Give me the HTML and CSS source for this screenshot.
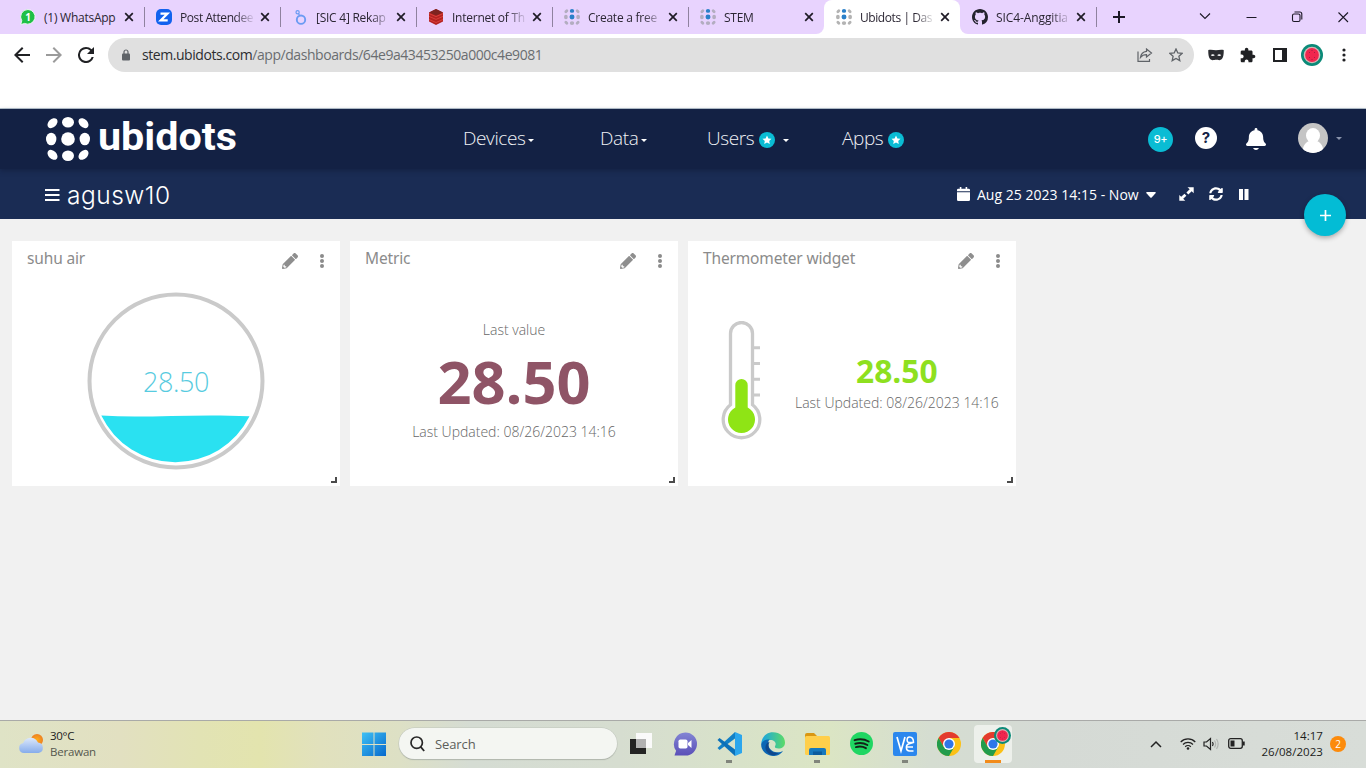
FILE: index.html
```html
<!DOCTYPE html>
<html lang="en">
<head>
<meta charset="utf-8">
<title>Ubidots | Dashboards</title>
<link rel="stylesheet" href="styles.css">
</head>
<body>
<svg class="defs" width="0" height="0">
  <defs>
    <symbol id="x" viewBox="0 0 10 10"><path d="M1.2 1.2l7.6 7.6M8.8 1.2L1.2 8.8" stroke="#1f1b26" stroke-width="1.7" fill="none"/></symbol>
    <symbol id="dots" viewBox="0 0 44 44">
      <g><circle cx="22" cy="22" r="6.8"/><ellipse cx="22" cy="5.3" rx="6" ry="5.2"/></g>
    </symbol>
    <symbol id="dots-outer" viewBox="0 0 44 44">
      <ellipse cx="22" cy="38.7" rx="6" ry="5.2"/><ellipse cx="5.2" cy="22" rx="5.2" ry="6.3"/><ellipse cx="38.8" cy="22" rx="5.2" ry="6.3"/>
      <ellipse cx="6.5" cy="6.2" rx="4" ry="5.8" transform="rotate(45 6.5 6.2)"/><ellipse cx="37.5" cy="6.2" rx="4" ry="5.8" transform="rotate(-45 37.5 6.2)"/>
      <ellipse cx="6.5" cy="37.8" rx="4" ry="5.8" transform="rotate(-45 6.5 37.8)"/><ellipse cx="37.5" cy="37.8" rx="4" ry="5.8" transform="rotate(45 37.5 37.8)"/>
    </symbol>
    <symbol id="pencil" viewBox="0 0 512 512"><path d="M497.9 142.1l-46.1 46.1c-4.7 4.7-12.3 4.7-17 0l-111-111c-4.7-4.7-4.7-12.3 0-17l46.1-46.1c18.7-18.7 49.1-18.7 67.9 0l60.1 60.1c18.8 18.7 18.8 49.1 0 67.9zM284.2 99.8L21.6 362.4.4 483.9c-2.9 16.4 11.4 30.6 27.8 27.8l121.5-21.3 262.6-262.6c4.7-4.7 4.7-12.3 0-17l-111-111c-4.8-4.7-12.4-4.7-17.1 0zM88 424h48v36.3l-64.5 11.3-31.1-31.1L51.7 376H88v48z" fill="#8e8e8e"/></symbol>
    <symbol id="more" viewBox="0 0 6 14"><g fill="#8b8b8b"><circle cx="3" cy="2" r="2"/><circle cx="3" cy="7" r="2"/><circle cx="3" cy="12" r="2"/></g></symbol>
    <symbol id="badge" viewBox="0 0 16 16"><circle cx="8" cy="8" r="8" fill="#0abcd4"/><path d="M8 3.600l1.400 2.800 3.100.4-2.300 2.200.6 3.100L8 10.600l-2.800 1.500.6-3.100-2.300-2.200 3.100-.4z" fill="#fff"/></symbol>
    <symbol id="chrome" viewBox="0 0 24 24">
      <circle cx="12" cy="12" r="12" fill="#fbc116"/>
      <path d="M12 6h10.4A12 12 0 0 0 1.6 6l5.2 9z" fill="#e33b2e"/>
      <path d="M1.6 6A12 12 0 0 0 12 24l5.2-9L12 12l-5.2 3z" fill="#229c4c"/>
      <circle cx="12" cy="12" r="6" fill="#fff"/><circle cx="12" cy="12" r="4.6" fill="#2f76e8"/>
    </symbol>
    <symbol id="melon" viewBox="0 0 22 22"><circle cx="11" cy="11" r="11" fill="#0b8a78"/><circle cx="11" cy="11" r="8.300" fill="#d5b5b4"/><circle cx="11" cy="11" r="6.900" fill="#f1264e"/><g fill="#8e1e42"><circle cx="8.500" cy="8.500" r=".5"/><circle cx="13.500" cy="8.500" r=".5"/><circle cx="8.500" cy="13.500" r=".5"/><circle cx="13.500" cy="13.500" r=".5"/><circle cx="11" cy="6.500" r=".5"/><circle cx="11" cy="15.500" r=".5"/></g></symbol>
  </defs>
</svg>

<header class="tabstrip">
  <div class="tab">
    <svg class="fav" viewBox="0 0 16 16"><path d="M8 .5a7.3 7.3 0 1 1-3.4 13.9L.8 15.5l1-3.8A7.3 7.3 0 0 1 8 .5z" fill="#1fbf46" stroke="#fff" stroke-width=".8"/><text x="8" y="11.6" class="wa">1</text></svg>
    <span class="tab-t">(1) WhatsApp</span><svg class="close"><use href="#x"/></svg>
  </div>
  <div class="tab sep">
    <svg class="fav" viewBox="0 0 16 16"><rect width="16" height="16" rx="5" fill="#1262ee"/><path d="M4.5 4.6h7L4.7 11.4h7" fill="none" stroke="#fff" stroke-width="2.2"/></svg>
    <span class="tab-t tight">Post Attendee</span><svg class="close"><use href="#x"/></svg>
  </div>
  <div class="tab sep">
    <svg class="fav" viewBox="0 0 16 16"><g fill="none" stroke="#6b9bf3"><circle cx="9" cy="10.7" r="4.2" stroke-width="1.9"/><circle cx="5.6" cy="3.3" r="1.6" stroke-width="1.2"/><path d="M6.5 4.6l1.2 2" stroke-width="1.1"/></g></svg>
    <span class="tab-t">[SIC 4] Rekap</span><svg class="close"><use href="#x"/></svg>
  </div>
  <div class="tab sep">
    <svg class="fav" viewBox="0 0 16 16"><path d="M8 0l7 3.4v9L8 16l-7-3.6v-9z" fill="#b52321"/><path d="M1 3.4L8 0l7 3.4-7 3z" fill="#7e2420"/><path d="M1 7.4l7 3 7-3M1 10.5l7 3 7-3M1 4.6l7 3 7-3" stroke="#d9403a" fill="none" stroke-width="1"/></svg>
    <span class="tab-t">Internet of Th</span><svg class="close"><use href="#x"/></svg>
  </div>
  <div class="tab sep">
    <svg class="fav" viewBox="0 0 44 44"><use href="#dots-outer" fill="#b3adc0"/><use href="#dots" fill="#2a80c9"/></svg>
    <span class="tab-t">Create a free</span><svg class="close"><use href="#x"/></svg>
  </div>
  <div class="tab sep">
    <svg class="fav" viewBox="0 0 44 44"><use href="#dots-outer" fill="#b3adc0"/><use href="#dots" fill="#2a80c9"/></svg>
    <span class="tab-t">STEM</span><svg class="close"><use href="#x"/></svg>
  </div>
  <div class="tab active">
    <svg class="fav" viewBox="0 0 44 44"><use href="#dots-outer" fill="#b3b3b3"/><use href="#dots" fill="#2a80c9"/></svg>
    <span class="tab-t tight">Ubidots | Das</span><svg class="close"><use href="#x"/></svg>
  </div>
  <div class="tab">
    <svg class="fav" viewBox="0 0 16 16"><path fill="#24222e" d="M8 0C3.58 0 0 3.58 0 8c0 3.54 2.29 6.53 5.47 7.59.4.07.55-.17.55-.38 0-.19-.01-.82-.01-1.49-2.01.37-2.53-.49-2.69-.94-.09-.23-.48-.94-.82-1.13-.28-.15-.68-.52-.01-.53.63-.01 1.08.58 1.23.82.72 1.21 1.87.87 2.33.66.07-.52.28-.87.51-1.07-1.78-.2-3.64-.89-3.64-3.95 0-.87.31-1.59.82-2.15-.08-.2-.36-1.02.08-2.12 0 0 .67-.21 2.2.82.64-.18 1.32-.27 2-.27s1.36.09 2 .27c1.53-1.04 2.2-.82 2.2-.82.44 1.1.16 1.92.08 2.12.51.56.82 1.27.82 2.15 0 3.07-1.87 3.75-3.65 3.95.29.25.54.73.54 1.48 0 1.07-.01 1.93-.01 2.2 0 .21.15.46.55.38A8.01 8.01 0 0 0 16 8c0-4.42-3.58-8-8-8z"/></svg>
    <span class="tab-t wide">SIC4-Anggitia</span><svg class="close"><use href="#x"/></svg>
  </div>
  <div class="tail sep"><svg class="newtab" width="14" height="14" viewBox="0 0 14 14"><path d="M7 1v12M1 7h12" stroke="#1c1826" stroke-width="2"/></svg></div>
  <svg class="winctl" width="166" height="28" viewBox="0 0 166 28" fill="none" stroke="#1c1826" stroke-width="1.100">
    <path d="M5 10.500l5 5 5-5M51.500 14.500h10"/>
    <rect x="97.500" y="11" width="7.500" height="7.500" rx="1.500"/><path d="M99.500 9h5.300a2 2 0 0 1 2 2v5.500"/>
    <path d="M143.500 9.500l9.500 9.500M153 9.500L143.500 19"/>
  </svg>
</header>

<div class="toolbar">
  <svg class="nav-i" width="16" height="16" viewBox="4 4 16 16"><path d="M20 11H7.830l5.590-5.590L12 4l-8 8 8 8 1.410-1.410L7.830 13H20z" fill="#202124"/></svg>
  <svg class="nav-i" width="16" height="16" viewBox="4 4 16 16"><path d="M12 4l-1.410 1.410L16.170 11H4v2h12.170l-5.580 5.590L12 20l8-8z" fill="#9b9b9b"/></svg>
  <svg class="nav-i" width="16" height="16" viewBox="4 4 16 16"><path d="M17.650 6.350A7.960 7.960 0 0 0 12 4a8 8 0 1 0 7.730 10h-2.080A6 6 0 1 1 12 6c1.660 0 3.140.690 4.220 1.780L13 11h7V4z" fill="#202124"/></svg>
  <div class="omni">
    <svg width="8" height="12" viewBox="0 0 8 12"><path d="M2 5V3a2 2 0 0 1 4 0v2" fill="none" stroke="#5f6368" stroke-width="1.200"/><rect y="4.500" width="8" height="7" rx="1" fill="#5f6368"/></svg>
    <span class="url"><b>stem.ubidots.com</b>/app/dashboards/64e9a43453250a000c4e9081</span>
    <svg width="16" height="14" viewBox="0 0 16 14" fill="none" stroke="#5f6368" stroke-width="1.200"><path d="M1 3.500v9.900h11.500v-2.400"/><path d="M9.500 1l5 4-5 4V6.700c-2.700 0-4.500.8-6 2.700.4-3.200 2.500-5.600 6-6z"/></svg>
    <svg width="14" height="14" viewBox="0 0 14 14"><path d="M7 1l1.800 4 4.300.4-3.200 2.900.9 4.300L7 10.400l-3.800 2.200.9-4.300L.9 5.400 5.200 5z" fill="none" stroke="#5f6368" stroke-width="1.300"/></svg>
  </div>
  <div class="exts">
    <svg width="16" height="12" viewBox="0 0 16 12"><path d="M.3 1C3 .3 5.500 1 8 1.300c2.500-.3 5-1 7.700-.3.200 5.500-.7 9.800-4.200 10.200-1.500 0-2.500-.4-3.500-.4s-2 .4-3.500.4C1 10.800.1 6.500.3 1z" fill="#2b2c30"/><path d="M2.800 6.300c1-1.500 3.200-1.200 4 0-1.200.8-2.900.8-4 0zM13.200 6.300c-1-1.500-3.200-1.200-4 0 1.200.8 2.900.8 4 0z" fill="#fff"/></svg>
    <svg width="16" height="16" viewBox="1 0 23 23"><path d="M20.500 11H19V7c0-1.100-.9-2-2-2h-4V3.500C13 2.120 11.880 1 10.500 1S8 2.120 8 3.500V5H4c-1.100 0-1.990.9-1.990 2v3.800H3.500c1.490 0 2.700 1.210 2.700 2.700s-1.210 2.700-2.700 2.700H2V20c0 1.100.9 2 2 2h3.800v-1.500c0-1.490 1.210-2.700 2.700-2.700 1.490 0 2.700 1.210 2.700 2.700V22H17c1.100 0 2-.9 2-2v-4h1.500c1.380 0 2.500-1.120 2.500-2.500S21.880 11 20.500 11z" fill="#202124"/></svg>
    <svg width="14" height="14" viewBox="0 0 14 14"><rect x="1" y="1" width="12" height="12" fill="#fff" stroke="#202124" stroke-width="2"/><path d="M9 0h5v14H9z" fill="#202124"/></svg>
    <svg width="22" height="22"><use href="#melon"/></svg>
    <svg width="4" height="14" viewBox="0 0 4 14"><g fill="#202124"><circle cx="2" cy="2" r="1.600"/><circle cx="2" cy="7" r="1.600"/><circle cx="2" cy="12" r="1.600"/></g></svg>
  </div>
</div>

<nav class="topnav">
  <svg class="logo" width="192" height="46" viewBox="0 0 192 46">
    <g fill="#fff"><use href="#dots" width="44" height="44" y="1"/><use href="#dots-outer" width="44" height="44" y="1"/></g>
    <text x="52" y="33.500" textLength="139" lengthAdjust="spacingAndGlyphs" class="logo-t">ubidots</text>
  </svg>
  <span class="menu m1">Devices<i class="caret"></i></span>
  <span class="menu m2">Data<i class="caret"></i></span>
  <span class="menu m3">Users<svg class="bdg"><use href="#badge"/></svg><i class="caret"></i></span>
  <span class="menu m4">Apps<svg class="bdg"><use href="#badge"/></svg></span>
  <span class="count">9+</span>
  <span class="help">?</span>
  <svg class="bell" width="20" height="22" viewBox="0 0 448 512" preserveAspectRatio="none"><path fill="#fff" d="M224 512c35.320 0 63.970-28.650 63.970-46H160.030c0 17.350 28.650 46 63.970 46zm215.390-149.710c-19.320-20.760-55.470-51.990-55.470-154.290 0-77.700-54.480-139.900-127.940-155.160V32c0-17.670-14.320-32-31.980-32s-31.980 14.330-31.980 32v20.840C118.560 68.100 64.080 130.300 64.080 208c0 102.300-36.150 133.530-55.470 154.290-6 6.450-8.660 14.160-8.610 21.710.11 16.400 12.980 32 32.100 32h383.800c19.120 0 32-15.600 32.100-32 .05-7.550-2.610-15.270-8.610-21.710z"/></svg>
  <svg class="avatar" width="30" height="30" viewBox="0 0 30 30"><clipPath id="av"><circle cx="15" cy="15" r="15"/></clipPath><g clip-path="url(#av)"><rect width="30" height="30" fill="#c5c5c5"/><ellipse cx="15" cy="12.500" rx="7" ry="7.500" fill="#fff"/><path d="M4.500 30c0-8 4-11.500 7-12h7c3 .5 7 4 7 12z" fill="#fff"/></g></svg>
  <i class="caret dim"></i>
</nav>

<div class="subnav">
  <svg width="15" height="14" viewBox="0 0 15 14"><path d="M0 2h14.500M0 7h14.500M0 12h14.500" stroke="#fff" stroke-width="2"/></svg>
  <h1>agusw10</h1>
  <svg class="cal" width="13" height="14" viewBox="0 0 13 14"><path d="M0 4.300V3a1.300 1.300 0 0 1 1.300-1.300h1.500V0h1.600v1.700h4.200V0h1.600v1.700h1.500A1.300 1.300 0 0 1 13 3v1.300zM0 5.300h13v7.400a1.300 1.300 0 0 1-1.300 1.300H1.300A1.300 1.300 0 0 1 0 12.700z" fill="#fff"/></svg>
  <span class="range">Aug 25 2023 14:15 - Now</span>
  <svg class="down" width="10" height="6" viewBox="0 0 10 6"><path d="M1 0h8q1.300.3.500 1.300L5.700 5.500q-.7.600-1.400 0L.5 1.300Q-.3.300 1 0z" fill="#fff"/></svg>
  <svg class="expand" width="15" height="14" viewBox="0 0 15 14"><path d="M8.500.3H14.700V6.200L12.700 4.300 9.300 7.400 7.400 5.500l3.300-3.200zM6.300 13.700H.3V7.900l1.900 1.900 3.300-3 1.900 1.900-3.200 3.100z" fill="#fff"/></svg>
  <svg class="sync" width="14" height="14" viewBox="0 0 512 512"><path fill="#fff" d="M370.720 133.280C339.458 104.008 298.888 87.962 255.848 88c-77.458.068-144.328 53.178-162.791 126.850-1.344 5.363-6.122 9.150-11.651 9.150H24.103c-7.498 0-13.194-6.807-11.807-14.176C33.933 94.924 134.813 8 256 8c66.448 0 126.791 26.136 171.315 68.685L463.030 40.970C478.149 25.851 504 36.559 504 57.941V192c0 13.255-10.745 24-24 24H345.941c-21.382 0-32.090-25.851-16.971-40.971l41.750-41.749zM32 296h134.059c21.382 0 32.090 25.851 16.971 40.971l-41.750 41.750c31.262 29.273 71.835 45.319 114.876 45.280 77.418-.07 144.315-53.144 162.787-126.849 1.344-5.363 6.122-9.150 11.651-9.150h57.304c7.498 0 13.194 6.807 11.807 14.176C478.067 417.076 377.187 504 256 504c-66.448 0-126.791-26.136-171.315-68.685L48.970 471.030C33.851 486.149 8 475.441 8 454.059V320c0-13.255 10.745-24 24-24z"/></svg>
  <svg class="pause" width="10" height="11" viewBox="0 0 10 11"><path d="M0 0h4v11H0zM5.500 0h4v11h-4z" fill="#fff"/></svg>
  <button class="add"><svg width="11" height="11" viewBox="0 0 11 11"><path d="M5.500 0v11M0 5.500h11" stroke="#fff" stroke-width="1.700"/></svg></button>
</div>

<main class="board">
  <section class="card">
    <div class="card-h"><h2>suhu air</h2><svg class="pen" width="16" height="16"><use href="#pencil"/></svg><svg width="6" height="14"><use href="#more"/></svg></div>
    <div class="card-b">
      <svg class="tank" width="178" height="178" viewBox="0 0 178 178">
        <circle cx="89" cy="89" r="86.500" fill="none" stroke="#cacaca" stroke-width="4"/>
        <path d="M14.300 123.600C60 126.500 105 121.500 162.500 124.300A82.500 82.500 0 0 1 14.300 123.600z" fill="#2ae1f1"/>
        <text x="89" y="99.500" text-anchor="middle" class="tank-t">28.50</text>
      </svg>
    </div>
    <svg class="grip" width="6" height="6" viewBox="0 0 6 6"><path d="M5 0v5H0" fill="none" stroke="#4b4b4b" stroke-width="2"/></svg>
  </section>
  <section class="card">
    <div class="card-h"><h2>Metric</h2><svg class="pen" width="16" height="16"><use href="#pencil"/></svg><svg width="6" height="14"><use href="#more"/></svg></div>
    <div class="card-b metric">
      <span class="lbl">Last value</span>
      <strong class="big">28.50</strong>
      <span class="lbl">Last Updated: 08/26/2023 14:16</span>
    </div>
    <svg class="grip" width="6" height="6" viewBox="0 0 6 6"><path d="M5 0v5H0" fill="none" stroke="#4b4b4b" stroke-width="2"/></svg>
  </section>
  <section class="card">
    <div class="card-h"><h2>Thermometer widget</h2><svg class="pen" width="16" height="16"><use href="#pencil"/></svg><svg width="6" height="14"><use href="#more"/></svg></div>
    <div class="card-b thermo">
      <svg width="42" height="120" viewBox="0 0 42 120">
        <path d="M32 26.700h7M32 42.500h7M32 58.200h7M32 74h7" stroke="#cacaca" stroke-width="3"/>
        <path d="M9.500 12.500a11 11 0 0 1 22 0v71.300a18.300 18.300 0 1 1-22 0z" fill="#fff" stroke="#cacaca" stroke-width="3.300"/>
        <path d="M14.300 64.200a6.200 6.200 0 0 1 12.400 0v22.300a13.500 13.500 0 1 1-12.400 0z" fill="#8fe415"/>
      </svg>
      <div class="reading"><strong class="green">28.50</strong><span class="lbl">Last Updated: 08/26/2023 14:16</span></div>
    </div>
    <svg class="grip" width="6" height="6" viewBox="0 0 6 6"><path d="M5 0v5H0" fill="none" stroke="#4b4b4b" stroke-width="2"/></svg>
  </section>
</main>

<footer class="taskbar">
  <svg class="weather" width="26" height="22" viewBox="0 0 26 22"><defs><linearGradient id="cl" x2="0" y2="1"><stop stop-color="#dce8fb"/><stop offset="1" stop-color="#86aceb"/></linearGradient><radialGradient id="sn"><stop stop-color="#ffad18"/><stop offset="1" stop-color="#ed8122"/></radialGradient></defs><circle cx="19" cy="7" r="6" fill="url(#sn)"/><path d="M6 20a5 5 0 0 1-.8-9.900A8 8 0 0 1 20 9.500a5.300 5.300 0 0 1 .5 10.500z" fill="url(#cl)"/></svg>
  <div class="wtext"><span>30°C</span><span class="sub">Berawan</span></div>
  <svg class="start" width="24" height="24" viewBox="0 0 24 24"><defs><linearGradient id="wn" x2="1" y2="1"><stop stop-color="#3fc1f5"/><stop offset="1" stop-color="#0669cd"/></linearGradient></defs><path d="M0 .5h11.500V12H0zM12.500.500H24V12H12.500zM0 13h11.500v11H0zM12.500 13H24v11H12.500z" fill="url(#wn)"/></svg>
  <div class="search"><svg width="16" height="16" viewBox="0 0 16 16"><circle cx="7.700" cy="6.700" r="5.700" fill="none" stroke="#272727" stroke-width="1.700"/><path d="M11.500 10.700l3.700 4.300" stroke="#272727" stroke-width="1.800"/></svg><span>Search</span></div>
  <div class="apps">
    <div class="app"><svg width="24" height="24" viewBox="0 0 24 24"><path d="M1 7h16v15H1z" fill="#242424"/><path d="M7 1h16v15H7z" fill="#fafafa"/><path d="M7 7h10v9H7z" fill="#b2b2b2"/></svg></div>
    <div class="app"><svg width="24" height="24" viewBox="0 0 24 24"><defs><linearGradient id="ch" x2="0" y2="1"><stop stop-color="#8385d4"/><stop offset="1" stop-color="#5a4fb8"/></linearGradient></defs><path d="M12.500.5a11.500 11.500 0 0 1 0 23H1.500l1.600-4.800A11.500 11.500 0 0 1 12.500.5z" fill="url(#ch)"/><rect x="5.500" y="7.500" width="9" height="9" rx="1.800" fill="#fff"/><path d="M15 11l3.500-3v8l-3.500-3z" fill="#fff"/></svg></div>
    <div class="app dot"><svg width="25" height="24" viewBox="0 0 25 24"><path d="M.5 16L18 0v6.500L2.500 18z" fill="#1380c6"/><path d="M2.500 6L18 17.500V24L.5 8z" fill="#0b70b8"/><path d="M18 0l7 3v18l-7 3z" fill="#2ba6ed"/></svg></div>
    <div class="app"><svg width="24" height="24" viewBox="0 0 24 24"><defs><linearGradient id="ed"><stop stop-color="#1ba3e3"/><stop offset="1" stop-color="#5bdb67"/></linearGradient></defs><path d="M.2 12C1 4 6 .2 12 .2c7 0 12 4.800 12 10.300 0 4-3 6-6.500 6-3 0-4-1.100-3.500-2.200 2-3.300-.5-6.300-4.500-6.300C5 8 1.500 10 .2 12z" fill="url(#ed)"/><path d="M.2 12C1.500 8.500 5 7 8.500 7.500 6 10 6.500 18 14 20c3 .8 6 0 8-1.300C19.500 23 15 24 12 23.900 5 23.600-.3 18 .2 12z" fill="#0c67b5"/><path d="M8.500 10c-3 5 1 11.500 9 11-5 4.500-12 1.500-13-4.500C4 13 6 10.500 8.500 10z" fill="#0f488d"/></svg></div>
    <div class="app dot"><svg width="25" height="24" viewBox="0 0 25 24"><path d="M0 3a2 2 0 0 1 2-2h7l3 3-3 4H0z" fill="#d99713"/><rect y="4" width="25" height="19" rx="1.500" fill="#ffcf4b"/><path d="M4 23v-5a2 2 0 0 1 2-2h13a2 2 0 0 1 2 2v5z" fill="#1779bd"/><path d="M8 19.500h9v3.500H8z" fill="#0c5c9d"/></svg></div>
    <div class="app"><svg width="23" height="23" viewBox="0 0 24 24"><circle cx="12" cy="12" r="12" fill="#1fd662"/><path d="M4.800 8.500c5-1.500 10.500-1 14.700 1.400M5.500 12.300c4.300-1.200 9-.8 12.600 1.300M6.200 15.800c3.600-1 7.400-.6 10.400 1.100" fill="none" stroke="#142318" stroke-width="2" stroke-linecap="round"/></svg></div>
    <div class="app dot"><svg width="24" height="24" viewBox="0 0 24 24"><rect width="24" height="24" rx="2" fill="#2b87ee"/><path d="M4 5l4 14 4-14" fill="none" stroke="#fff" stroke-width="1.700"/><path d="M20.500 10.500h-4.500c-2.600 0-2.600-5.500.5-5.500s4 2.500 4 5.500l-5 1.500c-3 1-3 7 1 7h4M14 15h6" fill="none" stroke="#fff" stroke-width="1.500"/></svg></div>
    <div class="app"><svg width="24" height="24"><use href="#chrome"/></svg></div>
    <div class="app on"><svg width="24" height="24"><use href="#chrome"/></svg><svg class="mini" width="17" height="17"><use href="#melon"/></svg></div>
  </div>
  <svg class="up" width="12" height="8" viewBox="0 0 12 8"><path d="M1 7l5-5 5 5" fill="none" stroke="#222" stroke-width="1.500"/></svg>
  <svg class="wifi" width="16" height="13" viewBox="0 0 16 13"><g fill="none" stroke="#222" stroke-width="1.200"><path d="M.7 5a10.300 10.300 0 0 1 14.600 0M3 7.500a7 7 0 0 1 10 0M5.200 9.800a4 4 0 0 1 5.600 0"/></g><circle cx="8" cy="11.500" r="1.300" fill="#222"/></svg>
  <svg class="snd" width="16" height="14" viewBox="0 0 16 14"><g fill="none" stroke="#222" stroke-width="1.200"><path d="M1 5h2.500L7.500 1.500v11L3.500 9H1z"/><path d="M9.500 5q1.300 2 0 4"/><path d="M11.500 3.500q2.300 3.500 0 7M13.500 2q3.300 5 0 10" stroke="#b1b4b1"/></g></svg>
  <svg class="bat" width="17" height="11" viewBox="0 0 17 11"><rect x=".7" y=".7" width="13.600" height="9.600" rx="2" fill="none" stroke="#222" stroke-width="1.300"/><path d="M2.500 2.500h4v6h-4zM15 3.500h1.700v4H15z" fill="#222"/></svg>
  <div class="clock"><span>14:17</span><span>26/08/2023</span></div>
  <span class="note">2</span>
</footer>
</body>
</html>
```
FILE: styles.css
```css
* { box-sizing: border-box; }
body { margin: 0; width: 1366px; height: 768px; overflow: hidden; display: flex; flex-direction: column; background: #f1f1f1; font-family: "Open Sans", "Noto Sans", sans-serif; }
svg { display: block; flex: none; }
.defs { position: absolute; }

.tabstrip { height: 34px; flex: none; display: flex; align-items: center; background: linear-gradient(#fff, #fff) 816px 26px / 152px 8px no-repeat #e8d3fe; padding-left: 8px; }
.tab { width: 136px; height: 34px; flex: none; display: flex; align-items: center; padding-left: 12px; background-color: #e8d3fe; }
.sep { background-image: linear-gradient(#8f829f, #8f829f); background-position: 0 7px; background-size: 1px 20px; background-repeat: no-repeat; }
.tab.active { background: #fff; border-radius: 8px 8px 0 0; box-shadow: 0 -8px 0 -0.1px #e8d3fe; clip-path: inset(0); }
.tab:nth-child(6) { border-bottom-right-radius: 8px; }
.tab:nth-child(8) { border-bottom-left-radius: 8px; }
.fav { width: 16px; height: 16px; }
.wa { font: 700 10px "Open Sans", sans-serif; fill: #fff; text-anchor: middle; }
.tab-t { width: 74px; margin-left: 8px; font-size: 12px; letter-spacing: -0.25px; color: #2b2633; white-space: nowrap; -webkit-mask-image: linear-gradient(90deg, #000 74%, transparent 102%); mask-image: linear-gradient(90deg, #000 74%, transparent 102%); }
.tab-t.tight { letter-spacing: -0.42px; }
.tab-t.wide { letter-spacing: -0.1px; }
.tab:first-child .tab-t { -webkit-mask-image: none; mask-image: none; }
.close { width: 10px; height: 10px; margin-left: 6px; }
.tail { width: 30px; height: 34px; display: flex; align-items: center; }
.newtab { margin-left: 16px; }
.winctl { margin-left: 69px; }

.toolbar { height: 75px; flex: none; display: flex; align-items: flex-start; background: #fff; border-bottom: 1px solid #b9c5cf; padding: 4px 0 0 14px; }
.nav-i { margin: 9px 16px 0 0; }
.omni { width: 1086px; height: 34px; margin-left: -2px; border-radius: 17px; background: #e0e0e0; display: flex; align-items: center; padding: 0 10px 2px 14px; }
.url { margin-left: 12px; width: 995px; flex: none; font-size: 14px; letter-spacing: -0.44px; color: #6a6d70; white-space: nowrap; }
.url b { font-weight: 400; color: #2c2d30; }
.omni svg { margin-top: 1px; }
.omni svg:last-child { margin-left: 16px; }
.exts { height: 34px; display: flex; align-items: center; margin-left: 14px; }
.exts svg:nth-child(2) { margin-left: 16px; }
.exts svg:nth-child(3) { margin-left: 17px; }
.exts svg:nth-child(4) { margin-left: 14px; }
.exts svg:nth-child(5) { margin-left: 19px; }

.topnav { height: 60px; flex: none; display: flex; align-items: center; background: #132144; padding-left: 46px; box-shadow: 0 2px 5px rgba(12, 20, 46, .4); z-index: 1; }
.logo-t { font: 700 38px "Roboto", "Open Sans", sans-serif; fill: #fff; }
.menu { height: 28px; margin-top: -2px; display: flex; align-items: center; color: #f0f2f6; font-size: 19px; font-weight: 300; letter-spacing: -0.4px; flex: none; }
.m1 { margin-left: 225px; width: 137px; }
.m2 { width: 107px; }
.m3 { width: 135px; }
.m4 { width: 306px; }
.bdg { width: 16px; height: 16px; margin: 4px 0 0 5px; }
.caret { width: 0; height: 0; border: 3.500px solid transparent; border-top: 3px solid #fff; border-bottom: 0; margin: 4px 0 0 3px; }
.m3 .caret { margin-left: 8px; }
.count { width: 25px; height: 25px; border-radius: 50%; background: #0abcd4; color: #fff; font: 500 11px/25px "Inter", sans-serif; letter-spacing: -0.4px; text-align: center; margin-top: 1px; flex: none; }
.help { width: 22px; height: 22px; border-radius: 50%; background: #fff; color: #132144; font: 700 15px/22px "Inter", sans-serif; text-align: center; margin: -2px 0 0 22px; flex: none; }
.bell { margin: -1px 0 0 29px; }
.avatar { margin: -2px 0 0 32px; }
.topnav .dim { margin: -1px 0 0 8px; border-top-color: #8993ab; }

.subnav { height: 50px; flex: none; display: flex; align-items: center; background: #1a2c54; padding-left: 45px; color: #fff; }
.subnav > svg:first-child { margin-top: 2px; }
.subnav h1 { margin: 2px 0 0; padding-left: 7px; width: 897px; font: 300 24.500px/34px "Inter", sans-serif; letter-spacing: 0.5px; }
.range { margin-left: 7px; width: 163px; font-size: 14px; letter-spacing: 0.02px; white-space: nowrap; }
.down { margin: 1px 0 0 6px; }
.expand { margin-left: 23px; }
.sync { margin-left: 15px; }
.pause { margin-left: 16px; }
.add { width: 42px; height: 42px; flex: none; border: 0; padding: 0; border-radius: 50%; background: #03bcd5; box-shadow: 0 2px 5px rgba(0, 0, 0, .3); margin: 42px 0 0 55px; display: flex; align-items: center; justify-content: center; z-index: 2; }

.board { flex: 1; display: flex; gap: 10px; padding: 22px 12px; align-items: flex-start; }
.card { width: 328px; height: 245px; background: #fff; display: flex; flex-direction: column; }
.card-h { height: 40px; flex: none; display: flex; align-items: center; padding: 0 15px; }
.card-h h2 { margin: -7px 0 0; font: 400 15.500px/22px "Noto Sans", sans-serif; color: #8b8b8b; flex: 1; letter-spacing: -0.15px; }
.pen { margin-right: 21px; }
.card-b { flex: 1; display: flex; align-items: center; justify-content: center; }
.tank { margin-top: 3px; }
.tank-t { font: 300 27px "Open Sans", sans-serif; fill: #57cbe0; letter-spacing: -0.4px; }
.metric { flex-direction: column; padding-top: 4px; }
.lbl { font-size: 14px; line-height: 20px; font-weight: 300; color: #666; white-space: nowrap; }
.big { font-size: 59.500px; line-height: 82px; color: #8f5466; font-weight: 700; }
.thermo { justify-content: flex-start; padding: 3px 0 0 33px; }
.reading { display: flex; flex-direction: column; align-items: center; margin: 1px 0 0 32px; }
.green { font-size: 31.700px; line-height: 44px; color: #8ee01f; }
.grip { align-self: flex-end; margin: 0 3px 3px 0; }

.taskbar { position: relative; z-index: 0; height: 48px; flex: none; display: flex; align-items: center; padding-bottom: 2px; border-top: 1px solid #a9aaa8; background: linear-gradient(90deg, #dfe3c6 0, #e2e0c1 120px, #e2e3b4 200px, #e3e4ae 260px, #e1e1bd 320px, #dde0c5 400px, #d5dcd3 470px, #d6ddd0 620px, #d8e2c9 740px, #dbe5c4 830px, #d5ddd1 930px, #d5dad5 1050px, #d8ddd8 1366px); }
.weather { margin-left: 18px; }
.wtext { margin-left: 6px; width: 312px; display: flex; flex-direction: column; font-size: 11.500px; line-height: 16px; letter-spacing: -0.3px; color: #1c1c1c; }
.sub { color: #55574e; letter-spacing: -0.2px; }
.search { margin-left: 13px; width: 218px; height: 31px; border-radius: 16px; background: #f4f6f2; box-shadow: 0 0 0 .5px #bfc5bc, 0 1px 1px #a4aaa0; display: flex; align-items: center; gap: 10px; padding-left: 10px; font-size: 13px; color: #5c5e5a; letter-spacing: -0.1px; }
.apps { display: flex; margin-left: 2px; width: 525px; height: 46px; }
.app { width: 44px; height: 46px; display: flex; flex: none; align-items: center; justify-content: center; position: relative; }
.dot { background: linear-gradient(#81857c, #81857c) center 39px / 6px 3px no-repeat; }
.on { background: linear-gradient(#f28b1a, #f28b1a) center 39px / 16px 3px no-repeat; }
.on::before { content: ""; position: absolute; z-index: -1; left: 3px; top: 4px; width: 38px; height: 38px; border-radius: 4px; background: #edf0eb; }
.mini { position: absolute; left: 23px; top: 6px; }
.up { margin-left: 6px; }
.wifi { margin-left: 18px; }
.snd { margin-left: 7px; }
.bat { margin-left: 9px; }
.clock { width: 80px; margin-left: -2px; display: flex; flex-direction: column; align-items: flex-end; font-size: 11.500px; line-height: 16px; letter-spacing: 0.05px; color: #1c1c1c; }
.note { width: 16px; height: 16px; margin-left: 7px; border-radius: 50%; background: #fc8b0c; color: #fff; font-size: 10px; line-height: 16px; text-align: center; flex: none; }
```
